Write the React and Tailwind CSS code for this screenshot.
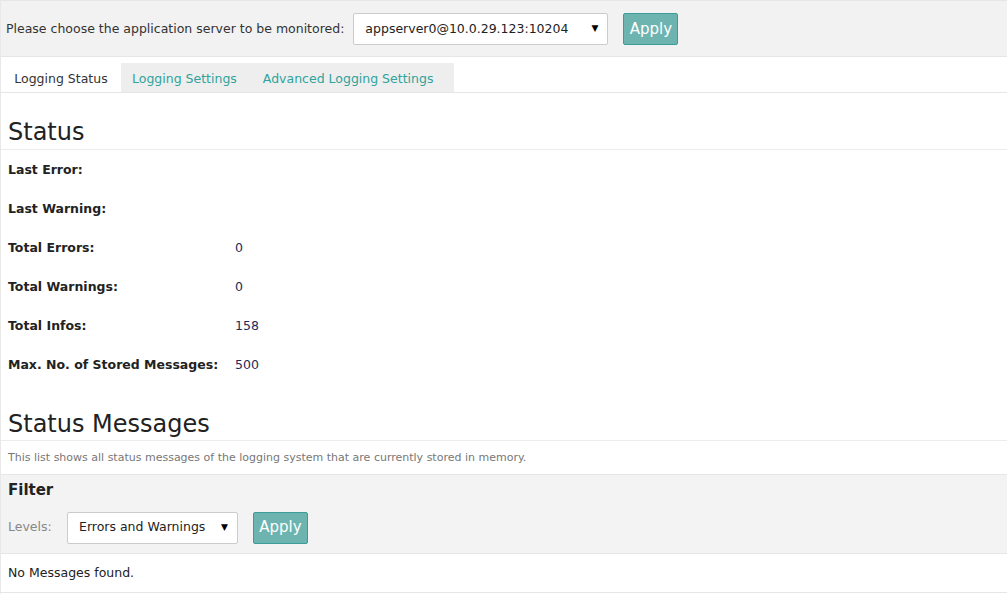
import React from "react";

function Select({ value, className }) {
  return (
    <div className={"flex items-center justify-between bg-white border border-[#cccccc] rounded-[2px] h-[32px] pl-[11px] pr-[9px] text-[12.5px] text-[#222] " + className}>
      <span>{value}</span>
      <span className="text-[9px] text-black">▼</span>
    </div>
  );
}

function ApplyBtn() {
  return (
    <button className="h-[32px] w-[55px] bg-[#6db4b0] border border-[#3c9d98] rounded-[2px] text-white text-[15px] flex items-center justify-center">
      Apply
    </button>
  );
}

const rows = [
  ["Last Error:", ""],
  ["Last Warning:", ""],
  ["Total Errors:", "0"],
  ["Total Warnings:", "0"],
  ["Total Infos:", "158"],
  ["Max. No. of Stored Messages:", "500"],
];

export default function App() {
  return (
    <div
      className="w-[1007px] h-[594px] bg-white text-[#333] border-l border-[#e8e8e8] text-[12.5px] overflow-hidden"
      style={{ fontFamily: '"DejaVu Sans", sans-serif' }}
    >
      <div className="h-[57px] bg-[#f2f2f2] border-t border-b border-[#e6e6e6] flex items-center pl-[5px] pt-[1px]">
        <span className="text-[#333] pt-[1px]">Please choose the application server to be monitored:</span>
        <Select value="appserver0@10.0.29.123:10204" className="ml-[9px] w-[255px]" />
        <div className="ml-[15px]"><ApplyBtn /></div>
      </div>
      <div className="mt-[6px] flex h-[30px] border-b border-[#e6e6e6]">
        <div className="w-[120px] bg-white flex items-center justify-center pt-[3px] text-[#333]">Logging Status</div>
        <div className="w-[333px] bg-[#eeeeee] flex items-center pt-[3px] pl-[11px] text-[#2fa39c] gap-[26px]">
          <span>Logging Settings</span>
          <span>Advanced Logging Settings</span>
        </div>
      </div>
      <div className="pt-[25px] px-[7px] pb-[3px] text-[24px] leading-[28px] text-[#222] border-b border-[#ececec]">Status</div>
      <div className="pl-[7px] pt-[11px]">
        {rows.map(([l, v]) => (
          <div key={l} className="flex h-[39px] items-start">
            <span className="w-[227px] font-bold text-[#222]">{l}</span>
            <span className="text-[#1b2d5a]">{v}</span>
          </div>
        ))}
      </div>
      <div className="pt-[15px] px-[7px] pb-[2px] text-[24px] leading-[28px] text-[#222] border-b border-[#ececec]">Status Messages</div>
      <div className="h-[33px] flex items-center pl-[7px] pt-[1px] text-[11px] text-[#777]">
        This list shows all status messages of the logging system that are currently stored in memory.
      </div>
      <div className="bg-[#f3f3f3] border-t border-b border-[#e6e6e6] h-[80px] pl-[7px] pt-[4px]">
        <div className="font-bold text-[15px] text-[#222]">Filter</div>
        <div className="flex items-center mt-[10px]">
          <span className="text-[#888] w-[59px]">Levels:</span>
          <Select value="Errors and Warnings" className="w-[171px]" />
          <div className="ml-[15px]"><ApplyBtn /></div>
        </div>
      </div>
      <div className="h-[39px] border-b border-[#e6e6e6] flex items-center pl-[7px] text-[#222]">No Messages found.</div>
    </div>
  );
}
